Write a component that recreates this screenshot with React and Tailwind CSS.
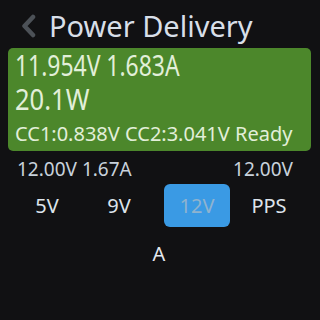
export default function App() {
  return (
    <div className="w-[320px] h-[320px] overflow-hidden bg-[#111113] text-white flex flex-col" style={{ fontFamily: '"Noto Sans", sans-serif' }}>
      <div className="flex items-center h-[48px] pl-[19px]">
        <svg width="18" height="24" viewBox="0 0 18 24" className="mt-[4px]">
          <path d="M14 3 L5.5 12 L14 21" stroke="#4c5157" strokeWidth="4.5" fill="none" strokeLinecap="round" strokeLinejoin="round" />
        </svg>
        <span className="ml-[12px] text-[29px] leading-none text-[#d8dfe8] mt-[2px]">Power Delivery</span>
      </div>
      <div className="ml-[8px] mr-[9px] h-[103px] rounded-[5px] bg-[#4c872b] text-[#e2efd9] pl-[7px] flex flex-col">
        <div className="text-[29px] leading-[34px]"><span className="inline-block origin-left scale-x-[0.79] whitespace-nowrap">11.954V 1.683A</span></div>
        <div className="text-[29px] leading-[34px]"><span className="inline-block origin-left scale-x-[0.88] whitespace-nowrap">20.1W</span></div>
        <div className="text-[20px] leading-[24px] mt-[6px]">CC1:0.838V CC2:3.041V Ready</div>
      </div>
      <div className="flex justify-between pl-[17px] pr-[27px] mt-[7px] text-[19px] leading-[22px] text-[#c8d2dc]">
        <span>12.00V 1.67A</span>
        <span>12.00V</span>
      </div>
      <div className="flex items-center mt-[4px] h-[43px] text-[20px] text-[#dde4ec]">
        <div className="w-[94px] text-center">5V</div>
        <div className="w-[50px] text-center">9V</div>
        <div className="ml-[20px] w-[66px] h-[43px] rounded-[6px] bg-[#3a9ae4] flex items-center justify-center text-[#8fb3cf]">12V</div>
        <div className="w-[78px] text-center">PPS</div>
      </div>
      <div className="text-center mt-[16px] text-[20px] leading-[22px] text-[#e4e8ee] pr-[2px]">A</div>
    </div>
  );
}
